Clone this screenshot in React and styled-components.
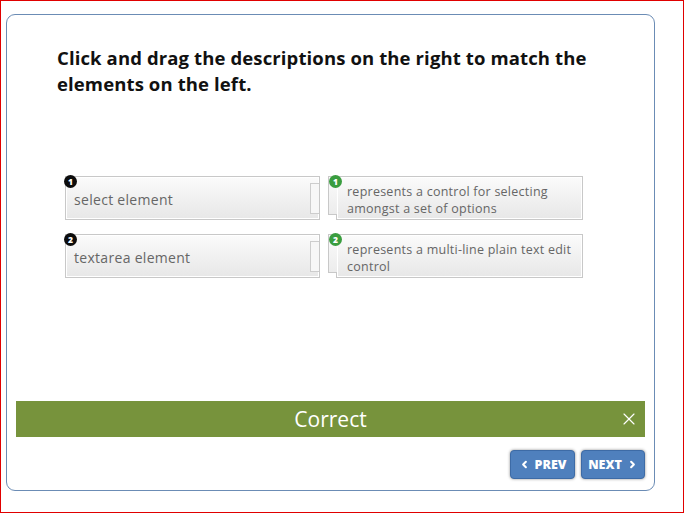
import React from "react";
import styled, { createGlobalStyle } from "styled-components";
import { ChevronLeft, ChevronRight, X } from "lucide-react";

const GlobalStyle = createGlobalStyle`
  html, body { margin: 0; padding: 0; background: #fff; }
  body { font-family: "Open Sans", "Noto Sans", sans-serif; }
`;

const Frame = styled.div`
  width: 684px;
  height: 513px;
  box-sizing: border-box;
  border: 1px solid #e00000;
  padding: 13px 0 0 5px;
`;

const Card = styled.div`
  width: 649px;
  height: 477px;
  box-sizing: border-box;
  border: 1px solid #6b8cb5;
  border-radius: 9px;
  display: flex;
  flex-direction: column;
  padding: 30px 9px 11px 9px;
  background: #fff;
`;

const Title = styled.h1`
  margin: 0 0 0 41px;
  max-width: 560px;
  font-size: 18.5px;
  letter-spacing: 0.12px;
  line-height: 26px;
  font-weight: 700;
  color: #111;
`;

const MatchGrid = styled.div`
  margin: 79px 0 0 49px;
  display: grid;
  grid-template-columns: 255px 247px;
  grid-auto-rows: 44px;
  column-gap: 16px;
  row-gap: 14px;
`;

const Piece = styled.div`
  position: relative;
  box-sizing: border-box;
  border: 1px solid #c8c8c8;
  background: linear-gradient(#fbfbfb, #e7e7e7);
  box-shadow: inset 0 0 0 1px #fff;
  color: #666;
`;

const Term = styled(Piece)`
  display: flex;
  align-items: center;
  padding: 2px 0 0 8px;
  font-size: 14px;
  letter-spacing: 0.3px;

  &::after {
    content: "";
    position: absolute;
    right: 0;
    top: 6px;
    bottom: 5px;
    width: 8px;
    border: 1px solid #cdcdcd;
    border-right: none;
    background: #f7f7f7;
  }
`;

const Description = styled(Piece)`
  padding: 6px 8px 0 10px;
  font-size: 12.5px;
  letter-spacing: 0.25px;
  line-height: 17px;

  &::before {
    content: "";
    position: absolute;
    left: -9px;
    top: -1px;
    width: 8px;
    height: 37px;
    border: 1px solid #c8c8c8;
    border-right: none;
    background: linear-gradient(#fbfbfb, #ececec);
  }
`;

const Badge = styled.span`
  position: absolute;
  top: ${(p) => p.$top}px;
  left: ${(p) => p.$left}px;
  width: 13px;
  height: 13px;
  border-radius: 50%;
  background: ${(p) => p.$bg};
  color: #fff;
  font-size: 8.5px;
  font-weight: 800;
  line-height: 13px;
  letter-spacing: 0;
  text-align: center;
  z-index: 1;
`;

const FeedbackBar = styled.div`
  margin-top: auto;
  height: 36px;
  position: relative;
  background: #77933c;
  color: #fff;
  display: flex;
  align-items: center;
  justify-content: center;
  font-size: 21px;
`;

const CloseIcon = styled.span`
  position: absolute;
  right: 6px;
  top: 8px;
  display: flex;
  color: #fff;
`;

const NavRow = styled.div`
  margin-top: 13px;
  display: flex;
  justify-content: flex-end;
  gap: 6px;
`;

const NavButton = styled.button`
  width: ${(p) => p.$w}px;
  height: 29px;
  box-sizing: border-box;
  border: 1px solid #3d6ba6;
  border-radius: 4px;
  background: #4f80bd;
  box-shadow: 0 0 3px rgba(0, 0, 0, 0.45);
  color: #fff;
  font-family: "Open Sans", sans-serif;
  font-size: 12.5px;
  font-weight: 800;
  display: flex;
  align-items: center;
  justify-content: center;
  gap: 5px;
  padding: 0;
`;

const pairs = [
  { term: "select element", desc: "represents a control for selecting amongst a set of options" },
  { term: "textarea element", desc: "represents a multi-line plain text edit control" },
];

export default function App() {
  return (
    <>
      <GlobalStyle />
      <Frame>
        <Card>
          <Title>Click and drag the descriptions on the right to match the elements on the left.</Title>
          <MatchGrid>
            {pairs.map((p, i) => (
              <React.Fragment key={i}>
                <Term>
                  <Badge $bg="#0d0d0d" $top={-2} $left={-2}>{i + 1}</Badge>
                  {p.term}
                </Term>
                <Description>
                  <Badge $bg="#3a9d3f" $top={-2} $left={-8}>{i + 1}</Badge>
                  {p.desc}
                </Description>
              </React.Fragment>
            ))}
          </MatchGrid>
          <FeedbackBar>
            Correct
            <CloseIcon>
              <X size={20} strokeWidth={1.4} />
            </CloseIcon>
          </FeedbackBar>
          <NavRow>
            <NavButton $w={65}>
              <ChevronLeft size={11} strokeWidth={4.5} />
              PREV
            </NavButton>
            <NavButton $w={64}>
              NEXT
              <ChevronRight size={11} strokeWidth={4.5} />
            </NavButton>
          </NavRow>
        </Card>
      </Frame>
    </>
  );
}
